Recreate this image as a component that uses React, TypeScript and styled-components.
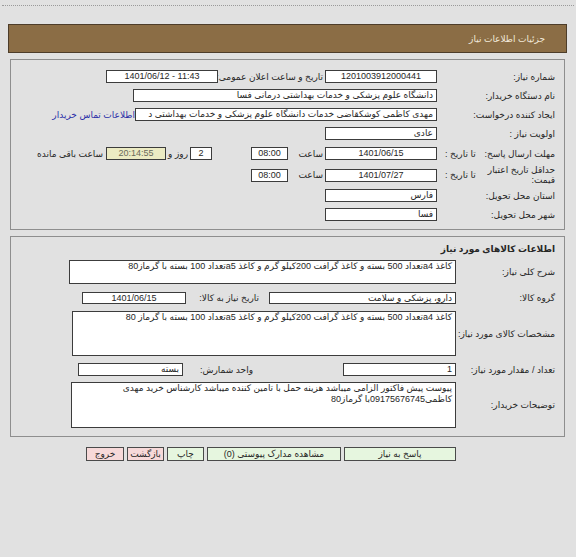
import styled, { createGlobalStyle } from "styled-components";

const GlobalStyle = createGlobalStyle`
  html, body {
    margin: 0;
    padding: 0;
    background: #e1e1e1;
  }
`;

const Page = styled.div`
  direction: rtl;
  width: 576px;
  height: 557px;
  box-sizing: border-box;
  padding-top: 5px;
  background: #e1e1e1;
  color: #262626;
  font-family: "Liberation Sans", "DejaVu Sans", sans-serif;
  font-size: 9px;
`;

const TopRule = styled.div`
  margin: 0 2px;
  border-top: 1px dotted #9a9a9a;
`;

const Header = styled.div`
  margin: 18px 9px 0 8px;
  height: 29px;
  box-sizing: border-box;
  display: flex;
  align-items: center;
  padding-right: 21px;
  background: #8b6d45;
  border: 1px solid #4d3d2a;
  color: #f1e9da;
  font-size: 9px;
`;

const Panel = styled.div<{ $pt: number; $pb: number }>`
  margin: 6px 11px 0 10px;
  box-sizing: border-box;
  border: 1px solid #8e8e8e;
  padding: ${(p) => p.$pt}px 9px ${(p) => p.$pb}px 0;
  display: flex;
  flex-direction: column;
`;

const Row = styled.div<{ $h: number; $mt?: number }>`
  display: flex;
  align-items: center;
  height: ${(p) => p.$h}px;
  margin-top: ${(p) => p.$mt ?? 0}px;
  white-space: nowrap;
`;

const Label = styled.div<{ $w: number }>`
  flex: none;
  width: ${(p) => p.$w}px;
  align-self: stretch;
  display: flex;
  align-items: center;
  justify-content: space-between;
  padding-left: 8px;
  box-sizing: border-box;
  line-height: 10px;
`;

const TwoLine = styled.span`
  white-space: normal;
  width: 72px;
`;

const Cell = styled.div<{ $w: number; $mr?: number }>`
  flex: none;
  width: ${(p) => p.$w}px;
  margin-right: ${(p) => p.$mr ?? 0}px;
`;

const Text = styled.span<{ $mr?: number }>`
  margin-right: ${(p) => p.$mr ?? 0}px;
`;

const Link = styled.span`
  color: #2a2ea8;
`;

const Box = styled.div<{
  $w: number;
  $h?: number;
  $mr?: number;
  $center?: boolean;
  $tint?: boolean;
  $ltr?: boolean;
}>`
  flex: none;
  width: ${(p) => p.$w}px;
  height: ${(p) => p.$h ?? 13}px;
  margin-right: ${(p) => p.$mr ?? 0}px;
  box-sizing: border-box;
  border: 1px solid #3c3c3c;
  background: ${(p) => (p.$tint ? "#ecebc3" : "#ffffff")};
  color: ${(p) => (p.$tint ? "#6a6a5a" : "#262626")};
  direction: ${(p) => (p.$ltr ? "ltr" : "rtl")};
  padding: 0 3px;
  line-height: 11px;
  text-align: ${(p) => (p.$center ? "center" : "right")};
  white-space: ${(p) => ((p.$h ?? 13) > 13 ? "normal" : "nowrap")};
  overflow: hidden;
`;

const Title = styled.div`
  height: 19px;
  display: flex;
  align-items: center;
  font-weight: bold;
  font-size: 9px;
`;

const ButtonBar = styled.div`
  display: flex;
  gap: 3px;
  margin-top: 10px;
  padding-right: 120px;
`;

const Button = styled.div<{ $w: number; $danger?: boolean }>`
  width: ${(p) => p.$w}px;
  height: 14px;
  box-sizing: border-box;
  border: 1px solid #4a4a4a;
  background: ${(p) => (p.$danger ? "#f7d9d9" : "#e6f6df")};
  display: flex;
  align-items: center;
  justify-content: center;
  font-size: 9px;
`;

const goods =
  "کاغذ a4تعداد 500 بسته و کاغذ گرافت 200کیلو گرم و کاغذ  a5تعداد 100 بسته با گرماز80";

export default function App() {
  return (
    <Page>
      <GlobalStyle />
      <TopRule />
      <Header>جزئیات اطلاعات نیاز</Header>

      <Panel $pt={7} $pb={5}>
        <Row $h={19}>
          <Label $w={118}>شماره نیاز:</Label>
          <Box $w={112} $center>
            1201003912000441
          </Box>
          <Cell $w={105} $mr={2}>تاریخ و ساعت اعلان عمومی:</Cell>
          <Box $w={112} $center $ltr>
            1401/06/12 - 11:43
          </Box>
        </Row>
        <Row $h={19}>
          <Label $w={118}>نام دستگاه خریدار:</Label>
          <Box $w={304}>دانشگاه علوم پزشکی و خدمات بهداشتی درمانی فسا</Box>
        </Row>
        <Row $h={19}>
          <Label $w={118}>ایجاد کننده درخواست:</Label>
          <Box $w={302}>
            مهدی  کاظمی کوشکقاضی خدمات دانشگاه علوم پزشکی و خدمات بهداشتی د
          </Box>
          <Link>اطلاعات تماس خریدار</Link>
        </Row>
        <Row $h={19}>
          <Label $w={118}>اولویت نیاز :</Label>
          <Box $w={112}>عادی</Box>
        </Row>
        <Row $h={21}>
          <Label $w={118}>
            <span>مهلت ارسال پاسخ:</span>
            <span>تا تاریخ :</span>
          </Label>
          <Box $w={112} $center>
            1401/06/15
          </Box>
          <Cell $w={35} $mr={2}>ساعت</Cell>
          <Box $w={37} $center>
            08:00
          </Box>
          <Box $w={22} $mr={39} $center>
            2
          </Box>
          <Text $mr={2}>روز و</Text>
          <Box $w={60} $mr={2} $center $tint>
            20:14:55
          </Box>
          <Text $mr={3}>ساعت باقی مانده</Text>
        </Row>
        <Row $h={22}>
          <Label $w={118}>
            <TwoLine>حداقل تاریخ اعتبار قیمت:</TwoLine>
            <span>تا تاریخ :</span>
          </Label>
          <Box $w={112} $center>
            1401/07/27
          </Box>
          <Cell $w={35} $mr={2}>ساعت</Cell>
          <Box $w={37} $center>
            08:00
          </Box>
        </Row>
        <Row $h={19}>
          <Label $w={118}>استان محل تحویل:</Label>
          <Box $w={112}>فارس</Box>
        </Row>
        <Row $h={19}>
          <Label $w={118}>شهر محل تحویل:</Label>
          <Box $w={112}>فسا</Box>
        </Row>
      </Panel>

      <Panel $pt={2} $pb={8}>
        <Title>اطلاعات کالاهای مورد نیاز</Title>
        <Row $h={24} $mt={2}>
          <Label $w={99}>شرح کلی نیاز:</Label>
          <Box $w={387} $h={24}>
            {goods}
          </Box>
        </Row>
        <Row $h={12} $mt={8}>
          <Label $w={99}>گروه کالا:</Label>
          <Box $w={187} $h={12}>
            دارو، پزشکی و سلامت
          </Box>
          <Cell $w={73} $mr={10}>تاریخ نیاز به کالا:</Cell>
          <Box $w={104} $h={12} $center>
            1401/06/15
          </Box>
        </Row>
        <Row $h={45} $mt={7}>
          <Label $w={99}>مشخصات کالای مورد نیاز:</Label>
          <Box $w={384} $h={45}>
            {goods.replace("گرماز80", "گرماز 80")}
          </Box>
        </Row>
        <Row $h={13} $mt={7}>
          <Label $w={99}>تعداد / مقدار مورد نیاز:</Label>
          <Box $w={113}>1</Box>
          <Cell $w={70} $mr={90}>واحد شمارش:</Cell>
          <Box $w={105}>بسته</Box>
        </Row>
        <Row $h={46} $mt={6}>
          <Label $w={99}>توضیحات خریدار:</Label>
          <Box $w={385} $h={46}>
            پیوست پیش فاکتور الزامی میباشد هزینه حمل با تامین کننده میباشد کارشناس خرید مهدی
            کاظمی09175676745با گرماز80
          </Box>
        </Row>
      </Panel>

      <ButtonBar>
        <Button $w={112}>پاسخ به نیاز</Button>
        <Button $w={134}>مشاهده مدارک پیوستی (0)</Button>
        <Button $w={37}>چاپ</Button>
        <Button $w={37} $danger>
          بازگشت
        </Button>
        <Button $w={38} $danger>
          خروج
        </Button>
      </ButtonBar>
    </Page>
  );
}
